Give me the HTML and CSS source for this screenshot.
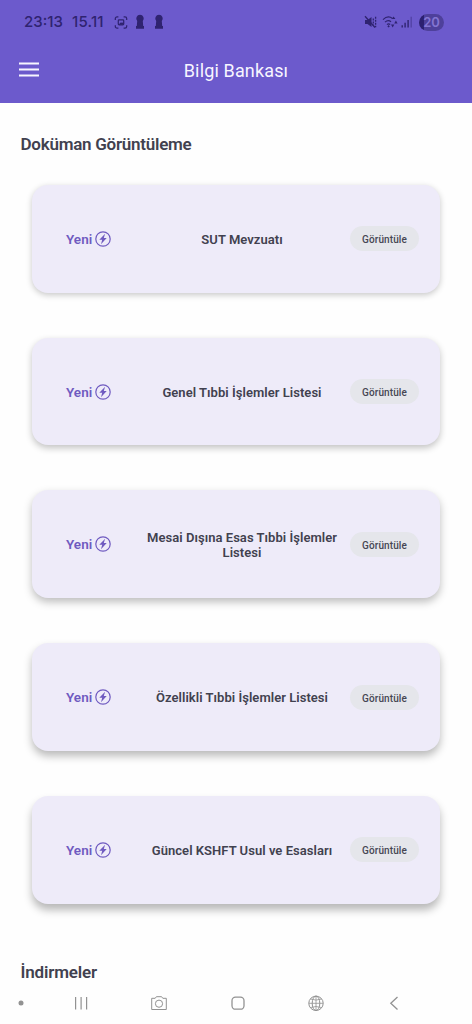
FILE: index.html
```html
<!DOCTYPE html>
<html lang="tr">
<head>
<meta charset="utf-8">
<meta name="viewport" content="width=device-width, initial-scale=1">
<title>Bilgi Bankası</title>
<link rel="stylesheet" href="styles.css">
</head>
<body>
<svg class="defs" width="0" height="0" aria-hidden="true">
  <symbol id="bolt" viewBox="0 0 16 16">
    <circle cx="8" cy="8" r="7.2" fill="none" stroke="currentColor" stroke-width="1.2"/>
    <path d="M10.100 2.700 4.300 8.800h2.900L6 13.300l5.700-6.200H8.800z" fill="currentColor"/>
  </symbol>
  <symbol id="pawn" viewBox="0 0 10 16">
    <path d="M5 .8a3.8 3.8 0 0 1 2.800 6.300L8.200 12H9v2.800H1V12h.8l.4-4.900A3.800 3.800 0 0 1 5 .8z" fill="currentColor"/>
  </symbol>
</svg>
<div class="screen">
  <header class="top">
    <div class="status">
      <span class="clock">23:13</span>
      <span class="date">15.11</span>
      <svg class="capture" width="14" height="15" viewBox="0 0 16 16" fill="none" stroke="currentColor" stroke-width="1.4">
        <path d="M1.500 5V3.500a2 2 0 0 1 2-2H5M11 1.500h1.500a2 2 0 0 1 2 2V5M14.500 11v1.500a2 2 0 0 1-2 2H11M5 14.500H3.500a2 2 0 0 1-2-2V11"/>
        <rect x="4.900" y="5.100" width="6.200" height="5.600" rx="1"/>
        <path d="M5.500 10 8 7.800l1.200.8 1-.8 1 1.200v1.700H5.500z" fill="currentColor" stroke="none"/>
      </svg>
      <svg class="pawn" width="10" height="16"><use href="#pawn"/></svg>
      <svg class="pawn second" width="10" height="16"><use href="#pawn"/></svg>
      <div class="signals">
        <svg width="13" height="14" viewBox="0 0 13 14">
          <path d="M1 5h2.500L7.500 2v10L3.500 9H1z" fill="currentColor"/>
          <path d="M1 1.200 11 12.500" stroke="currentColor" stroke-width="1.300"/>
          <path d="M9.300 3.500v7M11.600 1.800v10.400" stroke="currentColor" stroke-width="1.300" stroke-dasharray="2 1"/>
        </svg>
        <svg class="wifi" width="16" height="14" viewBox="0 0 16 14" fill="none" stroke="currentColor" stroke-width="1.200">
          <path d="M1 4.600C4.200 1.600 8 1.600 10.500 3.500M3 7.200c1.900-1.900 4.300-1.900 6-.5M5 9.600c1-1 2.200-1 3.200-.1"/>
          <path d="m11.600 1.500 1.800 2.600H9.800zM6.600 10l1.200 1.500-1.200 1.100-1.200-1.100zM9 9.500h3.300L10.700 12.500zM12.200 8.400h3.400l-1.700-3z" fill="currentColor" stroke="none"/>
        </svg>
        <svg class="bars" width="12" height="12" viewBox="0 0 12 12" stroke="currentColor" stroke-width="1.400">
          <path d="M1.200 11.500V9.200M4.100 11.500V6.700M7.100 11.500V4"/><path d="M10.200 11.500V.8" opacity=".4"/>
        </svg>
        <span class="battery">20</span>
      </div>
    </div>
    <div class="bar">
      <svg class="menu" width="20" height="15" viewBox="0 0 20 15"><path d="M0 1.500h20M0 7.500h20M0 13.500h20" stroke="#f7f5ff" stroke-width="2"/></svg>
      <h1>Bilgi Bankası</h1>
    </div>
  </header>
  <main>
    <h2>Doküman Görüntüleme</h2>
    <div class="cards">
      <article class="card depth1"><span class="new">Yeni <svg width="16" height="16"><use href="#bolt"/></svg></span><h3>SUT Mevzuatı</h3><button>Görüntüle</button></article>
      <article class="card depth2"><span class="new">Yeni <svg width="16" height="16"><use href="#bolt"/></svg></span><h3>Genel Tıbbi İşlemler Listesi</h3><button>Görüntüle</button></article>
      <article class="card depth3"><span class="new">Yeni <svg width="16" height="16"><use href="#bolt"/></svg></span><h3>Mesai Dışına Esas Tıbbi İşlemler Listesi</h3><button>Görüntüle</button></article>
      <article class="card depth4"><span class="new">Yeni <svg width="16" height="16"><use href="#bolt"/></svg></span><h3>Özellikli Tıbbi İşlemler Listesi</h3><button>Görüntüle</button></article>
      <article class="card depth5"><span class="new">Yeni <svg width="16" height="16"><use href="#bolt"/></svg></span><h3>Güncel KSHFT Usul ve Esasları</h3><button>Görüntüle</button></article>
    </div>
    <h2 class="downloads">İndirmeler</h2>
  </main>
  <nav class="system">
    <svg width="20" height="20" viewBox="0 0 20 20"><circle cx="10" cy="10" r="2.500" fill="currentColor"/></svg>
    <svg width="20" height="20" viewBox="0 0 20 20" stroke="currentColor" stroke-width="1.200"><path d="M4.600 4v12.500M10.100 4v12.500M15.600 4v12.500"/></svg>
    <svg width="20" height="20" viewBox="0 0 20 20" fill="none" stroke="currentColor"><path d="M2.700 5.300h3.500L7.400 3.700h5.200l1.200 1.600h3.500v11.200H2.700z"/><circle cx="10" cy="10.700" r="3.600"/></svg>
    <svg width="20" height="20" viewBox="0 0 20 20" fill="none" stroke="currentColor" stroke-width="1.300"><rect x="4" y="4.200" width="12" height="12" rx="3.500"/></svg>
    <svg width="20" height="20" viewBox="0 0 20 20" fill="none" stroke="currentColor"><circle cx="10" cy="10.300" r="7.200"/><ellipse cx="10" cy="10.300" rx="3.800" ry="7.200"/><path d="M10 3v14.500M2.800 10.300h14.400M4.300 6q5.700 2.200 11.400 0M4.300 14.600q5.700-2.200 11.400 0" stroke-width=".8"/></svg>
    <svg width="20" height="20" viewBox="0 0 20 20" fill="none" stroke="currentColor" stroke-width="1.300"><path d="m13.500 4-6.700 6.200 6.700 6.200"/></svg>
  </nav>
</div>
</body>
</html>
```
FILE: styles.css
```css
* { box-sizing: border-box; }
body { margin: 0; background: #fefefe; color: #41414f; font-family: Roboto, "Noto Sans", sans-serif; }
h1, h2, h3 { margin: 0; }
svg { display: block; flex: none; }
.defs { position: absolute; }
.screen { height: 1024px; display: flex; flex-direction: column; overflow: hidden; }
.top { height: 103px; flex: none; background: #6c5acc; }
.status { height: 44px; padding: 0 28px 0 24px; display: flex; align-items: center; color: #2f2370; font: 500 15px/18px Inter, sans-serif; }
.clock { width: 48px; }
.date { width: 42px; letter-spacing: .2px; }
.pawn { margin-left: 7px; }
.pawn.second { margin-left: 9px; }
.signals { margin-left: auto; display: flex; align-items: center; }
.wifi { margin-left: 5px; }
.bars { margin: 0 6px 0 3px; }
.battery { width: 25px; height: 17px; border-radius: 9px; background: linear-gradient(90deg, #2c2070 20%, #4e409b 20%); color: #8475d2; font: 600 13px/17px Inter, sans-serif; text-align: center; }
.bar { display: grid; grid-template-columns: 20px 1fr 20px; align-items: center; padding: 0 19px; height: 51px; }
.bar h1 { padding-top: 2px; color: #f7f5ff; text-align: center; font-size: 18px; font-weight: 400; line-height: 22px; letter-spacing: .15px; }
main { flex: 1; padding: 31px 21px 0 20.500px; min-height: 0; }
h2 { font-size: 17px; line-height: 20px; font-weight: 600; letter-spacing: -.25px; }
.cards { display: grid; gap: 45px; padding: 30.900px 11px 0 11.500px; }
.card { height: 107.800px; border-radius: 16px; background: #eeebf9; display: grid; grid-template-columns: 68px 200px 69px; column-gap: 8px; align-items: center; padding-left: 34px; }
.card h3 { font-size: 13px; line-height: 15px; font-weight: 600; text-align: center; padding-top: 1px; letter-spacing: .04px; }
.new { display: flex; align-items: center; gap: 3px; color: #6f5ac0; font-size: 13.500px; line-height: 16px; font-weight: 600; }
.card button { width: 69px; height: 25px; border: 0; padding: 3px 0 0; border-radius: 13px; background: #e5e6eb; color: #464653; font: 500 10px/14px Roboto, sans-serif; letter-spacing: .1px; }
.depth1 { box-shadow: 0 2px 6px rgba(0, 0, 0, .22); }
.depth2 { box-shadow: 0 3px 7px rgba(0, 0, 0, .24); }
.depth3 { box-shadow: 0 4px 8px rgba(0, 0, 0, .26); }
.depth4 { box-shadow: 0 5px 8px rgba(0, 0, 0, .27); }
.depth5 { box-shadow: 0 6px 9px rgba(0, 0, 0, .28); }
.downloads { padding-top: 58px; letter-spacing: -.15px; }
.system { height: 31px; flex: none; color: #929292; display: grid; grid-template-columns: 60px repeat(5, 78.250px); padding-left: 11px; }
```
